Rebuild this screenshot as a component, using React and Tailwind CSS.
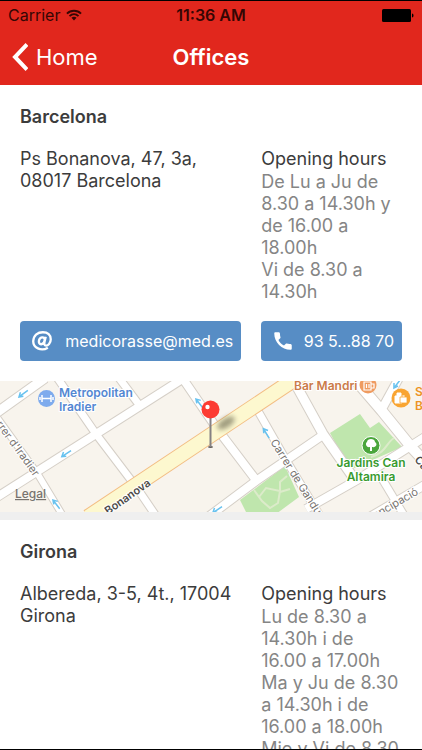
import React from "react";

const offices = [
  {
    city: "Barcelona",
    address: "Ps Bonanova, 47, 3a, 08017 Barcelona",
    hours: ["De Lu a Ju de 8.30 a 14.30h y de 16.00 a 18.00h", "Vi de 8.30 a 14.30h"],
    email: "medicorasse@med.es",
    phone: "93 5...88 70",
  },
  {
    city: "Girona",
    address: "Albereda, 3-5, 4t., 17004 Girona",
    hours: [
      "Lu de 8.30 a 14.30h i de 16.00 a 17.00h",
      "Ma y Ju de 8.30 a 14.30h i de 16.00 a 18.00h",
      "Mie y Vi de 8.30",
    ],
  },
];

const streets = [
  ["M-8 416L45 378", 9],
  ["M56 376L96 434L137 488L156 516", 7],
  ["M-6 499L184 378", 8],
  ["M-4 416L37 473L63 516", 6],
  ["M119 378L140 406", 7],
  ["M181 376L218 430L256 480", 8],
  ["M254 404L286 460L320 516", 7],
  ["M208 517L256 481L323 435", 8],
  ["M291 376L323 434L355 480", 9],
  ["M306 509L357 480L428 435", 8],
  ["M352 376L382 411L412 448L428 465", 10],
  ["M400 376L383 407", 8],
  ["M368 518L428 483", 8],
  ["M378 472L405 517", 7],
];

function Arrow({ x, y, angle }) {
  return (
    <g transform={`translate(${x} ${y}) rotate(${angle})`} stroke="#68c2ef" strokeWidth="1.5" fill="none">
      <path d="M-5 0H6M-1 -3L-5 0L-1 2" />
    </g>
  );
}

function CityMap() {
  return (
    <svg
      viewBox="0 381 422 131"
      preserveAspectRatio="xMidYMid slice"
      className="block w-full font-['Inter',sans-serif]"
      role="img"
      aria-label="Map of the Barcelona office"
    >
      <defs>
        <filter id="soft" x="-50%" y="-50%" width="200%" height="200%">
          <feGaussianBlur stdDeviation="2.5" />
        </filter>
      </defs>
      <rect x="0" y="380" width="422" height="132" fill="#f8f4ed" />
      <path d="M240 500L285 466L299 497L276 514H247Z" fill="#bfe6ad" />
      <path d="M254 490L262 501L270 508L278 503L280 491L266 488L259 497M280 492L290 489M280 492L280 482L287 476" fill="none" stroke="#dcebca" strokeWidth="2" />
      <path d="M330 433L360 414L370 428L379 422L402 447L350 470Z" fill="#bfe6ad" />
      <path d="M371 457C386 453 386 443 394 438" fill="none" stroke="#dcebca" strokeWidth="2" />

      <g fill="none" stroke="#d5cfc7">
        {streets.map(([d, w]) => <path key={d} d={d} strokeWidth={w + 2} />)}
      </g>
      <g fill="none" stroke="#ffffff">
        {streets.map(([d, w]) => <path key={d} d={d} strokeWidth={w} />)}
      </g>
      <path d="M88 517L304 373" stroke="#f3bd83" strokeWidth="16" />
      <path d="M88 517L304 373" stroke="#fdf8cf" strokeWidth="14" />

      <Arrow x={23} y={394} angle={-36} />
      <Arrow x={66} y={454} angle={-33} />
      <Arrow x={56} y={504} angle={52} />
      <Arrow x={199} y={403} angle={52} />
      <Arrow x={266} y={433} angle={58} />
      <Arrow x={217} y={510} angle={-33} />
      <Arrow x={397} y={384} angle={-52} />

      <g fontSize="11" fill="#77736f" stroke="#ffffff" strokeWidth="2" paintOrder="stroke">
        <text transform="translate(34 477) rotate(54)" textAnchor="end">Carrer d'Iradier</text>
        <text transform="translate(270 442) rotate(58)">Carrer de Ganduxer</text>
        <text transform="translate(419 494) rotate(-30)" textAnchor="end">mancipació</text>
      </g>
      <g fontSize="11" fontWeight="600" fill="#4c4a48" stroke="#ffffff" strokeWidth="2" paintOrder="stroke">
        <text transform="translate(108 515) rotate(-35)">Bonanova</text>
        <text transform="translate(414 460) rotate(50)">Carrer</text>
      </g>

      <circle cx="46.500" cy="398.500" r="8.500" fill="#7eabed" />
      <path d="M42 395V402M51 395V402M40 397V400M53 397V400M42 398.500H51" stroke="#fff" strokeWidth="1.500" />
      <g fontSize="12" fontWeight="600" fill="#5487d2" stroke="#fff" strokeWidth="2" paintOrder="stroke">
        <text x="59" y="397">Metropolitan</text>
        <text x="59" y="411">Iradier</text>
      </g>

      <text x="294" y="390" fontSize="12" fontWeight="600" fill="#cb7b49" stroke="#fff" strokeWidth="2" paintOrder="stroke">Bar Mandri</text>
      <circle cx="368" cy="385" r="8.500" fill="#ef9b60" />
      <path d="M364 382H371V390H364ZM371 384H374V388H371M366.500 384V388M369 384V388" fill="none" stroke="#fff" strokeWidth="1.200" />
      <circle cx="401" cy="398" r="9.500" fill="#f9a431" />
      <path d="M395 396H402V403H395ZM397 396V393H401V396" fill="#fff" stroke="#fff" />
      <path d="M400 397H407V403H400ZM402 397V395H405V397" fill="#fff" stroke="#f9a431" strokeWidth="0.800" />
      <g fontSize="12" fontWeight="600" fill="#ed9323">
        <text x="415" y="396">Sa</text>
        <text x="415" y="410">Ba</text>
      </g>

      <circle cx="371" cy="445.500" r="9" fill="#4aa63c" stroke="#fff" strokeWidth="1" />
      <path d="M370 451V447C366 448 365 443 367 442C367 438 375 438 375 442C378 444 376 448 372 447V451Z" fill="#fff" />
      <g fontSize="12" fontWeight="600" fill="#399b30" textAnchor="middle" stroke="#fff" strokeWidth="2" paintOrder="stroke">
        <text x="371" y="467">Jardins Can</text>
        <text x="371" y="481">Altamira</text>
      </g>
      <text x="15" y="498" fontSize="12" fontWeight="500" fill="#77736f" textDecoration="underline">Legal</text>

      <ellipse cx="226" cy="423" rx="10" ry="4.500" transform="rotate(-33 226 423)" fill="#77745c" opacity="0.700" filter="url(#soft)" />
      <ellipse cx="210.500" cy="447" rx="2.500" ry="1" fill="#625c58" />
      <path d="M210.500 417V447" stroke="#858182" strokeWidth="2" />
      <circle cx="210.500" cy="409.500" r="9" fill="#fc3b32" />
      <circle cx="207.500" cy="407" r="2.200" fill="#fff" />
    </svg>
  );
}

function ContactButton({ icon, children }) {
  return (
    <button className="flex h-10 min-w-0 items-center rounded bg-[#578dc5] px-2 text-base text-white">
      <svg viewBox="0 0 24 24" className="ml-1 size-5 shrink-0" fill="#fff" aria-hidden="true">{icon}</svg>
      <span className="flex-1 text-right whitespace-nowrap">{children}</span>
    </button>
  );
}

const atIcon = (
  <path
    d="M19 20C11 25 1 20 1.500 12C2 5 7 1.500 13 1.500C19 1.500 22.500 5 22.500 10C22.500 15 19 17.500 17 17.500C14.500 17.500 14.500 15.500 15 13L16.500 7M15.200 11C15.800 7 10 6 8.500 11C7 17 14 18 15.200 11Z"
    fill="none"
    stroke="#fff"
    strokeWidth="2.800"
  />
);

const phoneIcon = (
  <path d="M6.500 10.800C8 13.700 10.300 16 13.200 17.500L15.400 15.300C15.700 15 16.100 14.900 16.400 15C17.500 15.400 18.800 15.600 20 15.600C21.300 15.600 22.500 16 22.500 17V21C22.500 22 22 22.500 21 22.500C10.500 22.500 1.500 13.500 1.500 3C1.500 2 2 1.500 3 1.500H7C8 1.500 8.400 2.500 8.400 4C8.400 5.200 8.600 6.500 9 7.600C9.100 8 9 8.300 8.700 8.600Z" />
);

function Office({ office }) {
  return (
    <section>
      <div className="px-5 pt-[21px] pb-5">
        <h2 className="text-lg leading-[22px] font-semibold">{office.city}</h2>
        <div className="mt-5 grid grid-cols-[11fr_7fr] gap-x-5 gap-y-[18px]">
          <address className="not-italic">{office.address}</address>
          <div>
            <h3>Opening hours</h3>
            <div className="mt-px text-[#858585]">
              {office.hours.map((line) => <p key={line}>{line}</p>)}
            </div>
          </div>
          {office.email && <ContactButton icon={atIcon}>{office.email}</ContactButton>}
          {office.phone && <ContactButton icon={phoneIcon}>{office.phone}</ContactButton>}
        </div>
      </div>
      {office.email && (
        <div className="border-b-8 border-[#efefef]">
          <CityMap />
        </div>
      )}
    </section>
  );
}

export default function App() {
  return (
    <div className="flex h-screen flex-col overflow-hidden border-y border-black bg-white font-['Inter',sans-serif] text-[#3c3c3c]">
      <header className="shrink-0 bg-[#e1271d]">
        <div className="grid h-7 grid-cols-3 items-center px-2 text-[#350604]">
          <div className="flex items-center gap-1.5 text-base">
            <span>Carrier</span>
            <svg viewBox="0 0 17 12" className="h-3 w-4" fill="none" stroke="#350604" strokeWidth="2" aria-hidden="true">
              <path d="M1 4.500C5 0.500 12 0.500 16 4.500M3.700 7.200C6.500 4.500 10.500 4.500 13.300 7.200" />
              <path d="M5.800 9C7.500 7.500 9.500 7.500 11.200 9L8.500 11.800Z" fill="#350604" stroke="none" />
            </svg>
          </div>
          <span className="text-center text-base font-semibold">11:36 AM</span>
          <svg viewBox="0 0 32 13" className="h-[13px] w-8 justify-self-end" aria-hidden="true">
            <rect width="29" height="13" rx="1.500" fill="#000" />
            <path d="M30 4.500C32 5 32 8 30 8.500Z" fill="#000" />
          </svg>
        </div>
        <div className="grid h-14 grid-cols-3 items-center px-3 text-[22px] text-white">
          <button className="flex items-center gap-2">
            <svg viewBox="0 0 16 28" className="h-7 w-4" fill="none" stroke="#fff" strokeWidth="4" aria-hidden="true">
              <path d="M15 1.500L3 14L15 26.500" />
            </svg>
            Home
          </button>
          <h1 className="text-center font-semibold">Offices</h1>
        </div>
      </header>
      <main className="min-h-0 flex-1 overflow-y-auto text-lg leading-[22px] [scrollbar-width:none]">
        {offices.map((office) => <Office key={office.city} office={office} />)}
      </main>
    </div>
  );
}
